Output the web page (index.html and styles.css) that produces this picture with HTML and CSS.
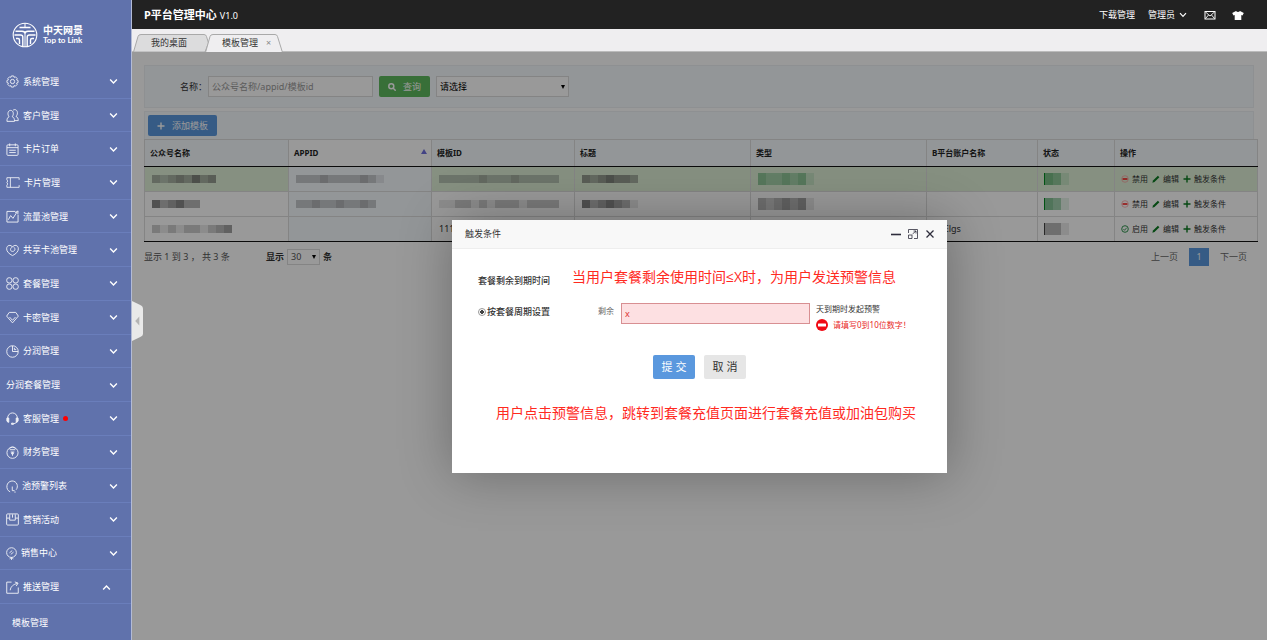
FILE: index.html
```html
<!DOCTYPE html>
<html lang="zh-CN">
<head>
<meta charset="utf-8">
<meta name="viewport" content="width=device-width, initial-scale=1">
<title>P平台管理中心</title>
<link rel="stylesheet" href="styles.css">
</head>
<body>
<svg class="defs" aria-hidden="true">
  <defs>
    <symbol id="down" viewBox="0 0 8 6"><path d="M1 1.2 4 4.4 7 1.2" fill="none" stroke="currentColor" stroke-width="1.2"/></symbol>
    <symbol id="ban" viewBox="0 0 8 8"><circle cx="4" cy="4" r="3.3" fill="none" stroke="#f99" stroke-width=".7"/><path d="M1.6 4h4.8" stroke="#f00" stroke-width="1.4"/></symbol>
    <symbol id="ok" viewBox="0 0 8 8"><circle cx="4" cy="4" r="3.3" fill="none" stroke="#1c8a3c" stroke-width=".9"/><path d="m2.4 4 1.2 1.3 2-2.5" fill="none" stroke="#1c8a3c" stroke-width=".8"/></symbol>
    <symbol id="pen" viewBox="0 0 8 8"><path d="M.4 7.7 1 5.600 5.900.7 7.400 2.200 2.500 7.100Z" fill="#0a7a20"/></symbol>
    <symbol id="plus" viewBox="0 0 8 8"><path d="M4 .5v7M.5 4h7" stroke="currentColor" stroke-width="1.4"/></symbol>
  </defs>
</svg>
<div class="app">
  <aside class="sidebar">
    <a class="logo" href="#">
      <svg class="logo-mark" viewBox="0 0 26 26" fill="none" stroke="#fff"><circle cx="13" cy="13" r="11.8" stroke-width="1.1"/><path d="M7.500 5.500H18.500M3.500 9.300H10Q13 9.300 13 11.500Q13 9.300 16 9.300H22.500M2.500 13H8.500Q10.800 13 10.800 15V24M23.500 13H17.500Q15.200 13 15.200 15V24M4 16.500H6Q7.500 16.500 7.500 18v4M22 16.500H20Q18.500 16.500 18.500 18v4" stroke-width="1.400"/><path d="M13 1v5M13 11v14" stroke-width="1"/></svg>
      <span class="logo-text"><b class="logo-cn">中天网景</b><b class="logo-en">Top to Link</b></span>
    </a>
    <nav class="menu">
      <a class="item" href="#"><svg class="mi" viewBox="0 0 14 14"><path d="M5.8 1h2.4l.5 1.5 1.5-.5 1.8 1.8-.6 1.5 1.6.6v2.2l-1.6.6.6 1.5-1.8 1.8-1.5-.6-.5 1.6H5.8l-.5-1.6-1.5.6L2 10.200l.6-1.500L1 8.100V5.900l1.600-.6L2 3.800 3.800 2l1.500.5Z"/><circle cx="7" cy="7" r="2.300"/></svg><span>系统管理</span><svg class="chev"><use href="#down"/></svg></a>
      <a class="item" href="#"><svg class="mi" viewBox="0 0 14 14"><path d="M1 13.300c0-3 .8-4.300 2.300-5C1.300 6 1.800 1.500 5 1.500S8.700 6 6.700 8.300C8.500 9 9.200 10.500 9.200 13.300ZM7.500 1.500C9-.3 12.300.8 12.300 4c0 2-.6 3-1.500 4 1.700.8 2.400 2 2.400 4.500H9.500"/></svg><span>客户管理</span><svg class="chev"><use href="#down"/></svg></a>
      <a class="item" href="#"><svg class="mi" viewBox="0 0 14 14"><rect x="1" y="2" width="12" height="11.300" rx="1"/><path d="M1 5h12M4 .5v3M10 .5v3M3.500 7.800h7M3.500 10.300h7"/></svg><span>卡片订单</span><svg class="chev"><use href="#down"/></svg></a>
      <a class="item" href="#"><svg class="mi wide" viewBox="0 0 16 14"><path d="M15 4V1.500H1V4q2 1 0 3 2 2 0 3v2.500h14V10M5 1.500v11"/></svg><span>卡片管理</span><svg class="chev"><use href="#down"/></svg></a>
      <a class="item" href="#"><svg class="mi" viewBox="0 0 14 14"><path d="M10 1.500H1v11.500h12V5M2.500 10.500 5 6l2.500 3 4.500-7M9.800 2.800 13 1l-.3 3.500"/></svg><span>流量池管理</span><svg class="chev"><use href="#down"/></svg></a>
      <a class="item" href="#"><svg class="mi" viewBox="0 0 14 14"><path d="M7 12.500C3 10.500.7 8 .7 5.200c0-4.500 4.800-4.500 6.300-2 1.500-2.500 6.300-2.500 6.300 2 0 2.800-2.300 5.300-6.300 7.300ZM7 3.200C4 4.500 4.300 8 7 8s3.500-3 1.500-4.500"/></svg><span>共享卡池管理</span><svg class="chev"><use href="#down"/></svg></a>
      <a class="item" href="#"><svg class="mi" viewBox="0 0 14 14"><rect x=".8" y=".8" width="5.600" height="5.600" rx="2.400"/><rect x="7.600" y=".8" width="5.600" height="5.600" rx="2.400"/><rect x=".8" y="7.600" width="5.600" height="5.600" rx="2.400"/><rect x="7.600" y="7.600" width="5.600" height="5.600" rx="2.400"/></svg><span>套餐管理</span><svg class="chev"><use href="#down"/></svg></a>
      <a class="item" href="#"><svg class="mi" viewBox="0 0 14 14"><path d="M3.500 1.500h7L13.300 5.500 7 12.800.7 5.500ZM3.800 6.500 7 10l3.200-3.500"/></svg><span>卡密管理</span><svg class="chev"><use href="#down"/></svg></a>
      <a class="item" href="#"><svg class="mi" viewBox="0 0 14 14"><circle cx="7" cy="7" r="6.200"/><path d="M7 1v6h6M9 3v2h2"/></svg><span>分润管理</span><svg class="chev"><use href="#down"/></svg></a>
      <a class="item" href="#"><span>分润套餐管理</span><svg class="chev"><use href="#down"/></svg></a>
      <a class="item" href="#"><svg class="mi" viewBox="0 0 14 14"><path d="M1.700 7c0-8 10.600-8 10.600 0M12 10q-1 2.500-4 2.700"/><path d="M1 6.500h2v4.500H2Q.3 10 1 6.500ZM13 6.500h-2v4.500h1Q13.700 10 13 6.500ZM6 12h2v1.300H6Z" fill="#fff"/></svg><span>客服管理</span><i class="dot"></i><svg class="chev"><use href="#down"/></svg></a>
      <a class="item" href="#"><svg class="mi" viewBox="0 0 14 14"><circle cx="7" cy="7.300" r="6"/><path d="M4 3q0-2 3-2t3 2M4 4h6M5 6.500h4M7 6.500v4M6 7v1.500h2V7"/></svg><span>财务管理</span><svg class="chev"><use href="#down"/></svg></a>
      <a class="item" href="#"><svg class="mi slim" viewBox="0 0 13 14"><path d="M4.500 12.800C-1 10.500 0 1.500 6.500 1 12 1 13.800 7 11 10.500M6.800 7v4.500h2.500M9 13h1.500"/></svg><span>池预警列表</span><svg class="chev"><use href="#down"/></svg></a>
      <a class="item" href="#"><svg class="mi" viewBox="0 0 14 14"><rect x=".7" y="1" width="12.600" height="12" rx="1"/><path d="M1 5.500h3V1.500M4 5.500v2.200h6V1.500M10 5.500H13M7 1.500V5"/></svg><span>营销活动</span><svg class="chev"><use href="#down"/></svg></a>
      <a class="item" href="#"><svg class="mi slimmer" viewBox="0 0 12 14"><circle cx="6" cy="6" r="5.300"/><path d="M4 12.800 6 11.300l2 1.500M6 11.300v2.700M3.800 6.300 6.800 3.800M5.200 8l3-2.500"/></svg><span>销售中心</span><svg class="chev"><use href="#down"/></svg></a>
      <a class="item open" href="#"><svg class="mi" viewBox="0 0 14 14"><path d="M6 1.200H.8v12h12.400V7M4.500 10C5 6 8 3.500 12.500 2.500M9.500 1l3.500 1.300L11 5.500"/></svg><span>推送管理</span><svg class="chev"><use href="#down"/></svg></a>
    </nav>
    <a class="subitem" href="#">模板管理</a>
  </aside>

  <div class="main">
    <header class="topbar">
      <h1 class="title">P平台管理中心</h1><span class="version">V1.0</span>
      <nav class="top-links">
        <a href="#">下载管理</a>
        <a href="#">管理员<svg class="caret"><use href="#down"/></svg></a>
        <a href="#" aria-label="消息"><svg class="ti" viewBox="0 0 12 12" fill="none" stroke="#fff"><rect x="1" y="2.500" width="10" height="7.500"/><path d="m1.500 3 4.500 4 4.500-4M1.500 9.500 4.500 6M10.500 9.500 7.500 6" stroke-width=".9"/></svg></a>
        <a href="#" aria-label="换肤"><svg class="ti" viewBox="0 0 12 12" fill="#fff"><path d="M4 2Q6 4 8 2l3.800 2L10.500 6.500 9.300 6v5H2.700V6l-1.200.5L.2 4Z"/></svg></a>
      </nav>
    </header>
    <div class="tabs">
      <a class="tab" href="#"><svg class="tab-bg" viewBox="0 0 76 18" preserveAspectRatio="none"><path d="M.5 18 5 2.500Q5.500.5 8 .5H71q2 0 2.500 2L75.500 9 72 18Z" fill="#dcdcdd" stroke="#a9a9a9"/></svg><span>我的桌面</span></a>
      <a class="tab active" href="#"><svg class="tab-bg" viewBox="0 0 78 18" preserveAspectRatio="none"><path d="M.5 18.500 5 2.500Q5.500.5 8 .5H70q2 0 2.500 2L77.500 18.500Z" fill="#efeef0" stroke="#a9a9a9"/></svg><span>模板管理</span><span class="close">×</span></a>
    </div>

    <div class="workspace">
      <form class="filter">
        <label for="kw">名称：</label>
        <input id="kw" class="field keyword" type="text" placeholder="公众号名称/appid/模板id">
        <button class="btn search" type="button"><svg class="bi" viewBox="0 0 8 8" fill="none" stroke="#fff" stroke-width="1.500"><circle cx="3.300" cy="3.300" r="2.500"/><path d="m5 5 2.700 2.700"/></svg>查询</button>
        <span class="select-box"><select class="field choose" aria-label="类型"><option>请选择</option></select><i class="arrow"></i></span>
      </form>
      <div class="tools"><button class="btn add" type="button"><svg class="bi"><use href="#plus"/></svg>添加模板</button></div>
      <table class="grid">
        <colgroup><col class="c144"><col class="c143"><col class="c143"><col class="c176"><col class="c176"><col class="c111"><col class="c77"><col class="c143"></colgroup>
        <thead><tr><th>公众号名称</th><th class="sorted">APPID<i class="sort"></i></th><th>模板ID</th><th>标题</th><th>类型</th><th>B平台账户名称</th><th>状态</th><th>操作</th></tr></thead>
        <tbody>
          <tr class="hot">
            <td><span class="mosaic"><i class="m3"></i><i class="m2"></i><i class="m3"></i><i class="m4"></i><i class="m3"></i><i class="m5"></i><i class="m3"></i><i class="m4"></i></span></td>
            <td class="sorted"><span class="mosaic"><i class="m2"></i><i class="m2"></i><i class="m2"></i><i class="m3"></i><i class="m2"></i><i class="m2"></i><i class="m2"></i><i class="m2"></i><i class="m3"></i><i class="m2"></i><i class="m1"></i></span></td>
            <td><span class="mosaic"><i class="m2"></i><i class="m2"></i><i class="m2"></i><i class="m2"></i><i class="m2"></i><i class="m3"></i><i class="m2"></i><i class="m2"></i><i class="m2"></i><i class="m3"></i><i class="m2"></i><i class="m2"></i><i class="m2"></i><i class="m2"></i><i class="m2"></i></span></td>
            <td><span class="mosaic"><i class="m4"></i><i class="m3"></i><i class="m4"></i><i class="m5"></i><i class="m4"></i><i class="m4"></i><i class="m3"></i></span></td>
            <td><span class="mosaic green tall"><i class="m3"></i><i class="m2"></i><i class="m2"></i><i class="m3"></i><i class="m2"></i><i class="m3"></i><i class="m1"></i></span></td>
            <td></td>
            <td><span class="mosaic green status"><i class="m4"></i><i class="m3"></i><i class="m1"></i></span></td>
            <td><span class="ops"><a href="#"><svg><use href="#ban"/></svg>禁用</a><a href="#"><svg><use href="#pen"/></svg>编辑</a><a href="#"><svg class="gp"><use href="#plus"/></svg>触发条件</a></span></td>
          </tr>
          <tr>
            <td><span class="mosaic"><i class="m5"></i><i class="m3"></i><i class="m4"></i><i class="m5"></i><i class="m3"></i><i class="m3"></i></span></td>
            <td class="sorted"><span class="mosaic"><i class="m2"></i><i class="m2"></i><i class="m3"></i><i class="m2"></i><i class="m2"></i><i class="m3"></i><i class="m2"></i><i class="m2"></i><i class="m3"></i><i class="m2"></i></span></td>
            <td><span class="mosaic"><i class="m1"></i><i class="m1"></i><i class="m2"></i><i class="m2"></i><i class="m1"></i><i class="m2"></i><i class="m1"></i><i class="m2"></i><i class="m2"></i><i class="m2"></i><i class="m1"></i><i class="m2"></i><i class="m2"></i><i class="m2"></i><i class="m2"></i></span></td>
            <td><span class="mosaic"><i class="m5"></i><i class="m3"></i><i class="m4"></i><i class="m5"></i><i class="m4"></i><i class="m3"></i><i class="m1"></i></span></td>
            <td><span class="mosaic tall"><i class="m3"></i><i class="m2"></i><i class="m3"></i><i class="m4"></i><i class="m3"></i><i class="m4"></i><i class="m1"></i></span></td>
            <td></td>
            <td><span class="mosaic green status"><i class="m4"></i><i class="m3"></i><i class="m1"></i></span></td>
            <td><span class="ops"><a href="#"><svg><use href="#ban"/></svg>禁用</a><a href="#"><svg><use href="#pen"/></svg>编辑</a><a href="#"><svg class="gp"><use href="#plus"/></svg>触发条件</a></span></td>
          </tr>
          <tr>
            <td><span class="mosaic"><i class="m2"></i><i class="m1"></i><i class="m2"></i><i class="m1"></i><i class="m2"></i><i class="m2"></i><i class="m1"></i><i class="m2"></i><i class="m3"></i><i class="m4"></i></span></td>
            <td class="sorted"></td>
            <td>11111</td>
            <td></td>
            <td></td>
            <td><span class="account">CElgs</span></td>
            <td><span class="mosaic status"><i class="m3"></i><i class="m3"></i><i class="m1"></i></span></td>
            <td><span class="ops"><a href="#"><svg><use href="#ok"/></svg>启用</a><a href="#"><svg><use href="#pen"/></svg>编辑</a><a href="#"><svg class="gp"><use href="#plus"/></svg>触发条件</a></span></td>
          </tr>
        </tbody>
      </table>
      <div class="foot">
        <span class="info">显示 1 到 3 ， 共 3 条</span>
        <label class="per">显示<span class="select-box"><select class="field count"><option>30</option></select><i class="arrow"></i></span>条</label>
        <nav class="pager"><a href="#">上一页</a><a class="current" href="#">1</a><a href="#">下一页</a></nav>
      </div>

      <div class="shade">
        <section class="dialog" role="dialog" aria-labelledby="dlg">
          <header class="dialog-head">
            <h2 id="dlg">触发条件</h2>
            <button type="button" aria-label="最小化"><svg viewBox="0 0 12 12"><path d="M1 6.500h10" stroke-width="1.600"/></svg></button>
            <button type="button" aria-label="最大化"><svg viewBox="0 0 12 12"><path d="M1.500 5V1.500h9v9H7M1.500 7h3.500v3.500H1.500ZM5.500 6 9 3M6.500 3H9v2.500" stroke-width=".8"/></svg></button>
            <button type="button" aria-label="关闭"><svg viewBox="0 0 12 12"><path d="m2.500 2.500 7 7M9.500 2.500 2.500 9.500" stroke-width="1.300"/></svg></button>
          </header>
          <form class="dialog-body">
            <div class="row"><span class="name">套餐剩余到期时间</span><p class="note">当用户套餐剩余使用时间≤X时，为用户发送预警信息</p></div>
            <div class="row second">
              <label class="mode"><input class="radio" type="radio" name="mode" checked>按套餐周期设置</label>
              <label class="left" for="days">剩余</label>
              <input id="days" class="days" type="text" value="x">
              <div class="hint"><span>天到期时发起预警</span><span class="error"><svg viewBox="0 0 12 12"><circle cx="6" cy="6" r="6" fill="#f00a14"/><rect x="2" y="4.500" width="8" height="3" rx=".6" fill="#fff"/></svg>请填写0到10位数字！</span></div>
            </div>
            <div class="actions"><button class="submit" type="button">提 交</button><button class="cancel" type="button">取 消</button></div>
            <p class="note lower">用户点击预警信息，跳转到套餐充值页面进行套餐充值或加油包购买</p>
          </form>
        </section>
      </div>
      <button class="collapse" type="button" aria-label="收起菜单"><svg viewBox="0 0 12 40" preserveAspectRatio="none"><path d="M0 0 9 4q3 1 3 4v25q0 2-3 3L0 40Z" fill="#e9e9e9"/><path d="M8 15.500v9L3.500 20Z" fill="#b4b4b4"/></svg></button>
    </div>
  </div>
</div>
</body>
</html>
```
FILE: styles.css
```css
* { box-sizing: border-box; }
body {
  margin: 0;
  font: 9px/16px "Noto Sans", "Noto Sans CJK SC", sans-serif;
  color: #333;
}
a { color: inherit; text-decoration: none; }
button, input, select { font: inherit; color: inherit; }
h1, h2, p { margin: 0; font: inherit; }
i { font-style: normal; }
svg { display: block; flex: none; }
.defs { position: absolute; width: 0; height: 0; }

.app { display: flex; min-height: 100vh; }

.sidebar {
  flex: none;
  display: flex;
  flex-direction: column;
  width: 132px;
  background: #6072ac;
  border-right: 1px solid #b3bbd6;
  color: #fff;
}
.logo { display: flex; align-items: center; gap: 5px; height: 65px; padding: 5px 0 0 12px; }
.logo-mark { width: 26px; height: 26px; }
.logo-text { display: flex; flex-direction: column; }
.logo-cn { font-size: 10px; line-height: 11px; }
.logo-en { font: bold 8px/9px Lato, sans-serif; }
.menu { flex: 1; display: flex; flex-direction: column; }
.item {
  flex: 1 0 30px;
  display: flex;
  align-items: center;
  gap: 4px;
  padding: 1px 13px 0 6px;
  border-bottom: 1px solid #6a7ebb;
}
.mi { width: 13px; height: 13px; fill: none; stroke: #fff; stroke-width: 1; opacity: .9; }
.mi.wide { width: 14px; }
.mi.slim { width: 12px; }
.mi.slimmer { width: 11px; }
.chev { width: 9px; height: 7px; margin-left: auto; }
.item.open { padding-right: 20px; }
.item.open .chev { transform: rotate(180deg); }
.dot { width: 5px; height: 5px; border-radius: 50%; background: #f00; }
.subitem { display: flex; align-items: center; height: 36px; padding: 2px 0 0 12px; }

.main { flex: 1; min-width: 0; display: flex; flex-direction: column; }
.topbar {
  display: flex;
  align-items: center;
  gap: 3px;
  height: 29px;
  padding: 0 23px 0 12px;
  background: #222;
  color: #fff;
}
.title { font-size: 11px; font-weight: bold; }
.version { padding-top: 2px; }
.top-links { display: flex; align-items: center; gap: 13px; margin-left: auto; }
.top-links a { display: flex; align-items: center; gap: 4px; }
.caret { width: 8px; height: 6px; margin-right: 4px; }
.ti { width: 12px; height: 12px; }
.top-links a:last-child { margin-left: 3px; }
.tabs { display: flex; height: 23px; padding: 5px 1px 0; background: #efeef0; border-bottom: 1px solid #bbb; }
.tab { position: relative; display: flex; width: 76px; padding: 1px 0 0 18px; height: 18px; }
.tab.active { width: 78px; margin-left: -4px; padding-left: 17px; }
.tab span { position: relative; }
.tab-bg { position: absolute; inset: 0; width: 100%; height: 18px; }
.tab .close { margin-left: 8px; color: #888; }

.workspace { position: relative; flex: 1; padding: 13px 9px 14px 12px; background: #fff; }
.filter {
  display: flex;
  align-items: center;
  height: 43px;
  margin-right: 4px;
  padding-left: 35px;
  background: #f5fafe;
  border: 1px solid #edf1f4;
}
.field {
  display: block;
  height: 21px;
  padding: 0 3px;
  background: transparent;
  border: 1px solid #ddd;
  border-radius: 0;
  appearance: none;
}
.field::placeholder { color: #999; opacity: 1; }
.keyword { width: 165px; margin: 0 6px 0 1px; background: #fff; }
.select-box { position: relative; display: block; }
.arrow {
  position: absolute;
  right: 4px;
  top: 50%;
  margin-top: -2px;
  border: solid transparent;
  border-width: 4px 2px 0;
  border-top-color: #000;
}
.choose { width: 133px; background: #fff; color: #000; }
.btn {
  display: flex;
  align-items: center;
  justify-content: center;
  gap: 7px;
  height: 21px;
  padding: 0 9px;
  border: 0;
  border-radius: 2px;
  color: #fff;
}
.bi { width: 8px; height: 8px; }
.search { background: #5eb95e; margin-right: 6px; }
.add { background: #5a98de; }
.tools { margin: 3px 4px 0 0; padding: 3px; background: #f5fafe; border: 1px solid #edf1f4; border-bottom: 0; height: 28px; }
.grid {
  width: 100%;
  table-layout: fixed;
  border-collapse: collapse;
}
.c144 { width: 144px; }
.c143 { width: 143px; }
.c176 { width: 176px; }
.c111 { width: 111px; }
.c77 { width: 77px; }
.grid th {
  height: 27px;
  padding: 0 5px;
  border: 1px solid #ddd;
  border-bottom-color: #111;
  background: #f5fafe;
  font-size: 8px;
  text-align: left;
  color: #222;
}
.grid th.sorted { position: relative; background: #fff; }
.sort {
  position: absolute;
  right: 4px;
  top: 9px;
  border: solid transparent;
  border-width: 0 3px 5px;
  border-bottom-color: #7070dd;
}
.grid td { height: 25px; padding: 0 7px; border: 1px solid #ddd; }
.grid tbody tr:last-child td { border-bottom-color: #111; }
.grid td:last-child { padding: 0 6px; }
.hot { background: #dff0d8; }
.grid td.sorted { background: #f5fafe; }
.mosaic { display: flex; }
.mosaic i { width: 8px; height: 8px; background: #555; }
.mosaic.tall i, .mosaic.status i { height: 12px; }
.mosaic.status { margin-left: -1px; border-left: 1px solid #444; }
.mosaic.green.status { border-left-color: #008a20; }
.mosaic.green i { background: #229040; }
.mosaic .m1 { opacity: .12; }
.mosaic .m2 { opacity: .3; }
.mosaic .m3 { opacity: .42; }
.mosaic .m4 { opacity: .55; }
.mosaic .m5 { opacity: .7; }
.account { padding-left: 4px; }
.ops { display: flex; gap: 4px; font-size: 8px; }
.ops a { display: flex; align-items: center; gap: 3px; }
.ops svg { width: 8px; height: 8px; }
.gp { color: #0a7a20; }
.foot { display: flex; align-items: center; padding: 5px 4px 0 0; }
.info { width: 122px; color: #555; }
.per { display: flex; align-items: center; gap: 3px; font-weight: bold; }
.count { width: 33px; height: 16px; font-weight: normal; color: #555; line-height: 14px; }
.pager { display: flex; align-items: center; margin-left: auto; padding: 1px 7px 0 0; gap: 11px; color: #666; }
.pager .current { width: 20px; background: #5a98de; color: #fff; text-align: center; line-height: 18px; }

.shade {
  position: absolute;
  inset: 0;
  display: grid;
  place-items: center;
  background: rgba(0, 0, 0, .4);
}
.dialog { width: 495px; background: #fff; box-shadow: 1px 1px 50px rgba(0, 0, 0, .3); }
.dialog-head {
  display: flex;
  align-items: center;
  gap: 5px;
  height: 29px;
  padding: 0 11px 0 13px;
  background: #f8f8f8;
  border-bottom: 1px solid #eee;
}
.dialog-head h2 { margin-right: auto; }
.dialog-head button { padding: 0; border: 0; background: none; }
.dialog-head svg { width: 12px; height: 12px; fill: none; stroke: #2e2d3c; }
.dialog-body { padding: 18px 26px 50px; }
.row { display: flex; align-items: flex-start; }
.name { width: 94px; padding-top: 6px; font-weight: 500; }
.note { font: 14px/20px "Open Sans", "Noto Sans CJK SC", sans-serif; color: #ff2a1f; white-space: nowrap; }
.second { margin-top: 14px; }
.mode { display: flex; align-items: center; gap: 1px; width: 120px; padding-top: 1px; font-weight: 500; }
.radio {
  width: 8px;
  height: 8px;
  margin: 0;
  appearance: none;
  border: 1px solid #999;
  border-radius: 50%;
  background: radial-gradient(circle, #444 0 2px, #fff 2px);
}
.left { width: 23px; font-size: 8px; color: #666; }
.days {
  width: 189px;
  height: 21px;
  padding: 0 3px;
  border: 1px solid #d88f92;
  background: #fde0e2;
  color: #d33;
}
.hint { display: flex; flex-direction: column; padding-left: 6px; font-size: 8px; line-height: 12px; gap: 4px; white-space: nowrap; }
.error { display: flex; gap: 5px; color: #e8281f; }
.error svg { width: 12px; height: 12px; }
.actions { display: flex; justify-content: center; gap: 9px; margin-top: 24px; }
.actions button { width: 42px; height: 24px; padding: 0; border: 0; border-radius: 2px; font-size: 11px; }
.submit { background: #5a98de; color: #fff; }
.cancel { background: #e6e6e6; color: #333; }
.lower { margin-top: 24px; padding-left: 18px; }

.collapse { position: absolute; left: 0; top: 249px; padding: 0; border: 0; background: none; }
.collapse svg { width: 11px; height: 40px; }
```
